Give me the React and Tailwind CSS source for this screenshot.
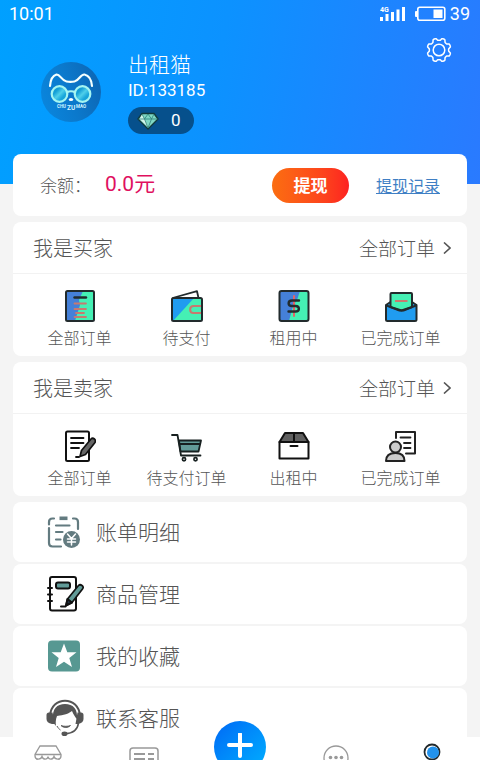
import clsx from 'clsx'

const gearPoints = Array.from({ length: 96 }, (_, i) => {
    const a = (i / 96) * Math.PI * 2
    const r = 10.8 - 1.2 * Math.tanh(2.2 * Math.cos(8 * a))
    return `${(13 + r * Math.cos(a)).toFixed(2)},${(13 + r * Math.sin(a)).toFixed(2)}`
}).join(' ')

function GearIcon() {
    return (
        <svg className="size-[26px]" viewBox="0 0 26 26" fill="none" stroke="#fff" strokeWidth="1.5" strokeLinejoin="round">
            <polygon points={gearPoints} />
            <circle cx="13" cy="13" r="5.800" />
        </svg>
    )
}

function SignalIcon() {
    return (
        <svg className="h-4 w-[26px]" viewBox="0 0 26 16" fill="#fff">
            <text x="0" y="6" fontSize="7" fontWeight="700" fontFamily="Roboto, sans-serif">4G</text>
            <rect x="0" y="11" width="3" height="4" />
            <rect x="5.5" y="8" width="3" height="7" />
            <rect x="11" y="6" width="3" height="9" />
            <rect x="16.5" y="3.5" width="3" height="11.5" />
            <rect x="22" y="1" width="3" height="14" />
        </svg>
    )
}

function BatteryIcon() {
    return (
        <svg className="h-4 w-[31px]" viewBox="0 0 31 16" fill="none">
            <rect x="2.8" y="1.3" width="27" height="13" rx="2" stroke="#fff" strokeWidth="1.6" />
            <rect x="0" y="5" width="2.5" height="6" rx="1" fill="#fff" />
            <rect x="18.5" y="3.5" width="9" height="8.5" fill="#fff" />
        </svg>
    )
}

function CatAvatar() {
    return (
        <svg className="size-[60px] shrink-0" viewBox="0 0 60 60" fill="none">
            <defs>
                <linearGradient id="avatarBg" x1="0" y1="0.6" x2="1" y2="0.3">
                    <stop offset="0" stopColor="#0a85dc" />
                    <stop offset="0.5" stopColor="#0b78cb" />
                    <stop offset="1" stopColor="#0d66b4" />
                </linearGradient>
                <linearGradient id="lens" x1="0" y1="0" x2="1" y2="1">
                    <stop offset="0.3" stopColor="#149fd6" />
                    <stop offset="0.5" stopColor="#4fd0ea" />
                    <stop offset="0.7" stopColor="#18a6db" />
                </linearGradient>
            </defs>
            <circle cx="30" cy="30" r="30" fill="url(#avatarBg)" />
            <path d="M9 24C9.500 18 12 13.500 15.500 12.500C19 12 20.500 18.500 25.500 19.500C28 20 31 20 33.500 19.500C38 18.500 39.500 12 43.500 12.500C48 13.500 50.500 18 51 24" stroke="#f4ffff" strokeWidth="2.200" strokeLinecap="round" />
            <circle cx="18.500" cy="32" r="7.800" fill="url(#lens)" stroke="#a5f5f2" strokeWidth="2.200" />
            <circle cx="41.500" cy="32" r="7.800" fill="url(#lens)" stroke="#a5f5f2" strokeWidth="2.200" />
            <path d="M26 30.500C28 28.800 32 28.800 34 30.500" stroke="#a5f5f2" strokeWidth="1.800" />
            <ellipse cx="30" cy="37.500" rx="2.200" ry="1.600" fill="#fff" />
            <g fill="#d5f4ff" fontFamily="Roboto, sans-serif" fontWeight="700">
                <text x="16" y="46" fontSize="4.500">CHU</text>
                <text x="26" y="48" fontSize="6.500">ZU</text>
                <text x="35" y="46" fontSize="4.500">MAO</text>
            </g>
        </svg>
    )
}

function DiamondIcon() {
    return (
        <svg className="h-[18px] w-[22px]" viewBox="0 0 22 18" strokeLinejoin="round">
            <path d="M5 1.500H17L21 7L11 17L1 7Z" fill="#7fd8c4" stroke="#123a3c" strokeWidth="1.400" />
            <path d="M5 2.500L7.500 7L11 15L2.500 7Z" fill="#d4f5ea" />
            <path d="M1.500 7H20.500M5 2L7.500 7L11 2L14.500 7L17 2M7.500 7L11 16L14.500 7" fill="none" stroke="#2f7f78" strokeWidth="0.800" />
        </svg>
    )
}

function OrdersIcon() {
    return (
        <svg className="size-8" viewBox="0 0 32 32" strokeLinecap="round">
            <rect x="2" y="1" width="28" height="30" rx="1.500" fill="#45f0b4" />
            <path d="M2 1H19L15 10L16 15L11 31H2Z" fill="#4580d8" />
            <path d="M10.500 13.500H22M10.500 19H22M12 23H20M10.500 27H22" stroke="#c8796f" strokeWidth="1.800" />
            <path d="M10.500 7.500H22" stroke="#222b2d" strokeWidth="2.400" />
            <rect x="2" y="1" width="28" height="30" rx="1.500" fill="none" stroke="#222b2d" strokeWidth="2" />
        </svg>
    )
}

function WalletIcon() {
    return (
        <svg className="h-8 w-[34px]" viewBox="0 0 34 32" strokeLinejoin="round">
            <path d="M2.500 8L27 1.200L28.500 8" fill="#fff" stroke="#222b2d" strokeWidth="1.800" />
            <rect x="2" y="8" width="30" height="23" rx="1.500" fill="#45f0b4" />
            <path d="M2 8H24L3 31H2Z" fill="#209cf0" />
            <path d="M32 16H23.500C19 16 19 23 23.500 23H32" fill="none" stroke="#c8796f" strokeWidth="2" />
            <rect x="2" y="8" width="30" height="23" rx="1.500" fill="none" stroke="#222b2d" strokeWidth="2" />
        </svg>
    )
}

function RentingIcon() {
    return (
        <svg className="size-8" viewBox="0 0 32 32" strokeLinecap="round">
            <rect x="1.500" y="1" width="29" height="30" rx="2" fill="#45f0b4" />
            <path d="M1.500 1H22L19 10L15 16L11 31H1.500Z" fill="#4580d8" />
            <path d="M16 6V26" stroke="#e06468" strokeWidth="2" />
            <path d="M21 10.500H14C9.500 10.500 9.500 16 14 16H17.500C22 16 22 21.500 17.500 21.500H10.500" fill="none" stroke="#222b2d" strokeWidth="2.400" />
            <rect x="1.500" y="1" width="29" height="30" rx="2" fill="none" stroke="#222b2d" strokeWidth="2" />
        </svg>
    )
}

function EnvelopeIcon() {
    return (
        <svg className="h-8 w-[34px]" viewBox="0 0 34 32" strokeLinejoin="round" stroke="#222b2d" strokeWidth="2">
            <path d="M6.500 12L2 15V29.500Q2 31 3.500 31H31Q32.500 31 32.500 29.500V15L28 12" fill="#209cf0" />
            <path d="M6.500 17V4Q6.500 3 7.500 3H27Q28 3 28 4V17L17.500 20.500Z" fill="#45f0b4" />
            <path d="M2.500 15.500L15.500 20.500H19.500L32 15.500" fill="none" />
            <path d="M11 11H23.500" stroke="#c8796f" strokeWidth="2" />
        </svg>
    )
}

function EditOrderIcon() {
    return (
        <svg className="size-8" viewBox="0 0 32 32" fill="none" strokeLinecap="round" strokeLinejoin="round" stroke="#111" strokeWidth="2">
            <rect x="2" y="1.500" width="23" height="29.500" rx="1.500" />
            <path d="M7 8H19.500M7 13H19.500M7 18H15M12 27H15" strokeWidth="1.800" />
            <path d="M16 26.500L17.500 20.500L27 9Q28.500 7.500 30.500 9Q32 10.500 31 12.500L21.500 24.500Z" fill="#666" strokeWidth="1.700" />
        </svg>
    )
}

function CartIcon() {
    return (
        <svg className="h-8 w-[34px]" viewBox="0 0 34 32" fill="none" strokeLinecap="round" strokeLinejoin="round" stroke="#172020" strokeWidth="1.800">
            <path d="M9 10.500H31L28.500 21.500H10.500Z" fill="#629b98" />
            <path d="M2 5H7.500L11 25.500H30.500M9 14H30" />
            <circle cx="14" cy="29.300" r="1.600" strokeWidth="1.700" />
            <circle cx="25.500" cy="29.300" r="1.600" strokeWidth="1.700" />
        </svg>
    )
}

function BoxIcon() {
    return (
        <svg className="size-8" viewBox="0 0 32 32" fill="none" strokeLinecap="round" strokeLinejoin="round" stroke="#111" strokeWidth="2">
            <path d="M1.500 12L7 3H25L30.500 12Z" fill="#5f5f5f" />
            <path d="M1.500 12H30.500V28.500H1.500ZM16 3V11" />
            <path d="M12.500 16H19.500" />
        </svg>
    )
}

function DoneOrderIcon() {
    return (
        <svg className="h-8 w-[34px]" viewBox="0 0 34 32" fill="none" strokeLinecap="round" strokeLinejoin="round" stroke="#222" strokeWidth="2">
            <path d="M12 8V2H31V23.500H22" />
            <path d="M16.500 7.500H26.500M20 13H26.500M20 18H26.500" strokeWidth="1.800" />
            <circle cx="11.500" cy="17" r="5.500" fill="#ccc" />
            <path d="M2 31C2 26 5 23 11.500 23C18 23 20.500 26 20.500 31Z" fill="#ccc" />
        </svg>
    )
}

function BillIcon() {
    return (
        <svg className="size-[38px]" viewBox="0 0 38 38" fill="none" strokeLinecap="round" stroke="#637b80" strokeWidth="2.200">
            <path d="M8 5.500H6.500Q3 5.500 3 9V11.500M3 15V30Q3 33.500 6.500 33.500H15M27 5.500H28.500Q32 5.500 32 9V16" />
            <path d="M13.500 5.300H21.500" strokeWidth="3.600" strokeLinecap="butt" />
            <path d="M10 12.500H23.500M10 19H16.500M10 26.500H14.500" />
            <circle cx="25.500" cy="26.500" r="8.500" fill="#637b80" stroke="none" />
            <path d="M21.500 21L25.500 25.500L29.500 21M25.500 25.500V32M21.500 26H29.500M21.500 29H29.500" stroke="#fff" strokeWidth="1.500" />
        </svg>
    )
}

function NotebookIcon() {
    return (
        <svg className="size-[38px]" viewBox="0 0 38 38" fill="none" strokeLinecap="round" strokeLinejoin="round" stroke="#111" strokeWidth="2">
            <rect x="4" y="2" width="26" height="33.500" rx="2" />
            <path d="M2 13H6M2 19.500H6M2 26H6M15 31.500H19.500" />
            <rect x="10" y="7.500" width="14" height="6" rx="2" fill="#629b98" />
            <path d="M20 30.500L21.500 24L32.500 10.500Q34 9 36 10.500Q38 12 36.500 14L26 27.500Z" fill="#629b98" strokeWidth="1.700" />
            <path d="M20 30.500L21.500 24L26 27.500Z" fill="#234" />
        </svg>
    )
}

function StarIcon() {
    return (
        <svg className="size-[38px]" viewBox="0 0 38 38">
            <rect x="2" y="3.500" width="32" height="31" rx="4" fill="#579892" />
            <path d="M18 6.500L21.300 15.300H30.500L23.300 21L26 30L18 24.700L10 30L12.700 21L5.500 15.300H14.700Z" fill="#fff" />
        </svg>
    )
}

function ServiceIcon() {
    return (
        <svg className="size-[38px]" viewBox="0 0 38 38" fill="none">
            <path d="M4 17C5 -3.500 33 -3.500 34 17" stroke="#555" strokeWidth="2" />
            <path d="M7 20C6 10 11 5 19 5C27 5 32 10 31 20C29 18 27.500 15.500 26 12C21 16 14 16.500 11 17C9.500 21 9.500 24 10 27C8 25 7.200 23 7 20Z" fill="#555" />
            <path d="M0.500 16Q0.500 13.500 3 13.500H6.500L9 25H6Q0.500 24 0.500 20ZM37.500 16Q37.500 13.500 35 13.500H31.500L29.500 25H32Q37.500 24 37.500 20Z" fill="#555" />
            <path d="M32.500 24C31.500 31 27 34.500 19 34.800" stroke="#555" strokeWidth="1.600" />
            <ellipse cx="18.500" cy="34.700" rx="3" ry="2.300" fill="#555" />
            <path d="M15 26.500C17.500 29.200 22 29.200 24.500 26.500C22 27.500 17.500 27.500 15 26.500Z" fill="#555" stroke="#555" strokeWidth="0.800" />
            <path d="M11 27C12 29 13 30 14.500 31" stroke="#555" strokeWidth="1" />
        </svg>
    )
}

const buyerItems = [
    { text: '全部订单', icon: OrdersIcon },
    { text: '待支付', icon: WalletIcon },
    { text: '租用中', icon: RentingIcon },
    { text: '已完成订单', icon: EnvelopeIcon },
]

const sellerItems = [
    { text: '全部订单', icon: EditOrderIcon },
    { text: '待支付订单', icon: CartIcon },
    { text: '出租中', icon: BoxIcon },
    { text: '已完成订单', icon: DoneOrderIcon },
]

const menuItems = [
    { text: '账单明细', icon: BillIcon },
    { text: '商品管理', icon: NotebookIcon },
    { text: '我的收藏', icon: StarIcon },
    { text: '联系客服', icon: ServiceIcon },
]

function OrderCard({ title, items }) {
    return (
        <section className="rounded-lg bg-white">
            <div className="flex h-[52px] items-center justify-between border-b border-[#f2f2f2] pl-5 pr-4">
                <h2 className="text-[20px] leading-6">{title}</h2>
                <a href="#" className="flex items-center gap-2 text-[19px] leading-6">
                    全部订单
                    <svg className="h-3 w-2" viewBox="0 0 8 12" fill="none" stroke="#555" strokeWidth="1.600">
                        <path d="M1 0.500L7 6L1 11.500" />
                    </svg>
                </a>
            </div>
            <div className="grid grid-cols-4 px-[13px] pt-4 pb-2">
                {items.map(item => (
                    <button key={item.text} type="button" className="flex flex-col items-center gap-1">
                        <item.icon />
                        <span className="whitespace-nowrap text-[16px] leading-[22px]">{item.text}</span>
                    </button>
                ))}
            </div>
        </section>
    )
}

function TabButton({ label, className, children }) {
    return (
        <button type="button" aria-label={label} className={clsx('flex justify-center', className)}>
            {children}
        </button>
    )
}

export default function App() {
    return (
        <div className="flex h-screen flex-col overflow-hidden bg-[#f4f4f4] font-['Noto_Sans_CJK_SC',sans-serif] font-light text-[#555]">
            <div className="min-h-0 flex-1 overflow-hidden">
                <header className="bg-[linear-gradient(100deg,#00a0ff_0%,#0c92ff_45%,#2a7aff_100%)] pb-[50px] font-['Roboto','Noto_Sans_CJK_SC',sans-serif] font-normal text-white">
                    <div className="flex h-7 items-center justify-between pl-[9px] pr-[10px] text-[18px] leading-6">
                        <span>10:01</span>
                        <div className="flex items-center gap-[9px]">
                            <SignalIcon />
                            <div className="flex items-center gap-1">
                                <BatteryIcon />
                                <span>39</span>
                            </div>
                        </div>
                    </div>
                    <div className="flex items-start justify-between pl-[41px] pr-7 pt-[9px]">
                        <div className="flex items-start gap-[27px] pt-4">
                            <div className="pt-[9px]">
                                <CatAvatar />
                            </div>
                            <div className="flex flex-col items-start">
                                <h1 className="text-[21px] font-light leading-6">出租猫</h1>
                                <p className="text-[17px] leading-[26px]">ID:133185</p>
                                <div className="mt-1 flex h-[27px] items-center gap-3 rounded-full bg-[#06508c] pl-[9px] pr-[13px]">
                                    <DiamondIcon />
                                    <span className="text-[17px]">0</span>
                                </div>
                            </div>
                        </div>
                        <button type="button" aria-label="设置">
                            <GearIcon />
                        </button>
                    </div>
                </header>

                <main className="relative -mt-[30px] flex flex-col gap-1.5 px-[13px]">
                    <section className="flex h-[62px] items-center rounded-lg bg-white px-[27px]">
                        <span className="text-[17px]">余额：</span>
                        <span className="ml-[14px] flex-1 font-['Roboto','Noto_Sans_CJK_SC',sans-serif] text-[21px] font-normal text-[#e0105f]">0.0元</span>
                        <button type="button" className="h-[35px] w-[77px] rounded-full bg-linear-to-r from-[#fb6d10] to-[#fd2020] text-[17px] font-bold text-white">提现</button>
                        <a href="#" className="ml-[27px] text-[16px] font-normal text-[#3f7fc4] underline">提现记录</a>
                    </section>

                    <OrderCard title="我是买家" items={buyerItems} />
                    <OrderCard title="我是卖家" items={sellerItems} />

                    <nav className="flex flex-col gap-0.5">
                        {menuItems.map(item => (
                            <a key={item.text} href="#" className="flex h-[60px] items-center gap-3 rounded-lg bg-white px-[33px] text-[21px]">
                                <item.icon />
                                {item.text}
                            </a>
                        ))}
                    </nav>
                </main>
            </div>

            {/* bottom tab bar, the middle button sticks out above it */}
            <nav className="relative grid h-[23px] shrink-0 grid-cols-5 bg-white">
                <TabButton label="首页" className="pt-2">
                    <svg className="size-7" viewBox="0 0 28 28" fill="none" stroke="#999" strokeWidth="1.300">
                        <path d="M6 1H22L27 9.500V11C27 15 21 15 20 11.500C19 15 14.500 15 14 11.500C13.500 15 9 15 8 11.500C7 15 1 15 1 11V9.500ZM1 9.500H27M3 14V26H25V14" />
                    </svg>
                </TabButton>
                <TabButton label="订单" className="pt-2.5">
                    <svg className="h-7 w-[30px]" viewBox="0 0 30 28" fill="none" stroke="#999" strokeWidth="1.500">
                        <rect x="1" y="1" width="28" height="24" rx="3" />
                        <path d="M5 7H16M19 7H25M5 12H16M19 12H25" strokeWidth="2" />
                    </svg>
                </TabButton>
                <TabButton label="发布" className="relative">
                    <span className="absolute -top-4 flex size-[52px] items-center justify-center rounded-full bg-linear-to-br from-[#0868f5] to-[#04b0ff]">
                        <svg className="size-7" viewBox="0 0 28 28" stroke="#fff" strokeWidth="4" strokeLinecap="round">
                            <path d="M14 1V23M3 12H25" />
                        </svg>
                    </span>
                </TabButton>
                <TabButton label="消息" className="pt-2">
                    <svg className="size-[26px]" viewBox="0 0 26 26" fill="none">
                        <circle cx="13" cy="13" r="12" stroke="#999" strokeWidth="1.300" />
                        <circle cx="7.500" cy="12.500" r="1.800" fill="#999" />
                        <circle cx="13" cy="12.500" r="1.800" fill="#999" />
                        <circle cx="18.500" cy="12.500" r="1.800" fill="#999" />
                    </svg>
                </TabButton>
                <TabButton label="我的" className="pt-1.5">
                    <svg className="size-7" viewBox="0 0 28 28" fill="none">
                        <circle cx="14" cy="9" r="7.500" fill="#fff" stroke="#22292c" strokeWidth="1.800" />
                        <circle cx="15" cy="9.500" r="6" fill="#2292ec" />
                        <path d="M3 27C4 20 9 18 14 18C19 18 24 20 25 27" stroke="#22292c" strokeWidth="1.800" />
                    </svg>
                </TabButton>
            </nav>
        </div>
    )
}
